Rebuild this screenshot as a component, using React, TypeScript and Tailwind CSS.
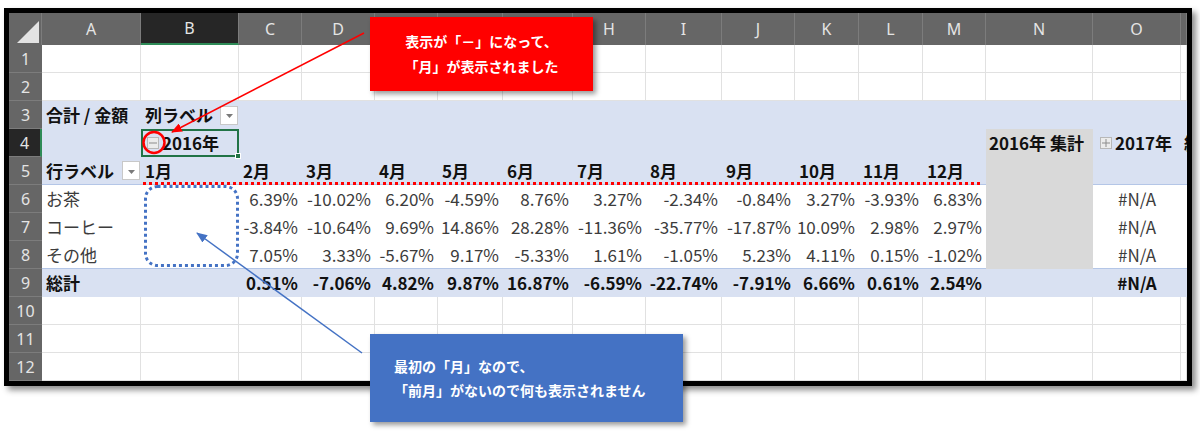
import React from 'react'

const LETTERS = ['', 'A', 'B', 'C', 'D', 'E', 'F', 'G', 'H', 'I', 'J', 'K', 'L', 'M', 'N', 'O', '']
const MONTHS = ['1月', '2月', '3月', '4月', '5月', '6月', '7月', '8月', '9月', '10月', '11月', '12月']

const DATA: Record<number, { label: string; vals: string[] }> = {
  6: {
    label: 'お茶',
    vals: ['6.39%', '-10.02%', '6.20%', '-4.59%', '8.76%', '3.27%', '-2.34%', '-0.84%', '3.27%', '-3.93%', '6.83%'],
  },
  7: {
    label: 'コーヒー',
    vals: ['-3.84%', '-10.64%', '9.69%', '14.86%', '28.28%', '-11.36%', '-35.77%', '-17.87%', '10.09%', '2.98%', '2.97%'],
  },
  8: {
    label: 'その他',
    vals: ['7.05%', '3.33%', '-5.67%', '9.17%', '-5.33%', '1.61%', '-1.05%', '5.23%', '4.11%', '0.15%', '-1.02%'],
  },
  9: {
    label: '総計',
    vals: ['0.51%', '-7.06%', '4.82%', '9.87%', '16.87%', '-6.59%', '-22.74%', '-7.91%', '6.66%', '0.61%', '2.54%'],
  },
}

function Dropdown() {
  return (
    <span className="ml-auto mr-[1px] flex h-[19px] w-[18px] shrink-0 items-center justify-center border border-[#c8c8c8] bg-white">
      <svg width="7" height="4" viewBox="0 0 7 4" className="mt-[2px]">
        <path d="M0 0h7L3.5 4z" fill="#7a7a7a" />
      </svg>
    </span>
  )
}

function Toggle({ plus }: { plus?: boolean }) {
  return (
    <span className="mr-[3px] flex h-[12px] w-[12px] shrink-0 items-center justify-center border border-[#b8b8b8] bg-[#ececec]">
      <svg width="8" height="8" viewBox="0 0 8 8">
        <path d={plus ? 'M0 4h8M4 0v8' : 'M0 4h8'} stroke="#8c8c8c" strokeWidth="1" />
      </svg>
    </span>
  )
}

function Cell({ r, c }: { r: number; c: number }) {
  const pivot = r >= 3 && r <= 9
  let bg = 'bg-white border-r border-b border-[#e1e1e1]'
  if (pivot) {
    if (c === 14 && r >= 4 && r <= 8) bg = 'bg-[#d9d9d9]'
    else if (r >= 6 && r <= 8) bg = 'bg-white'
    else bg = 'bg-[#d9e1f2]'
    if ((r === 5 || r === 8) && c !== 14) bg += ' border-b border-[#b4c6e7]'
  }

  const base = 'flex items-center overflow-hidden whitespace-nowrap text-[17px]'
  const bold = 'font-bold text-[#111]'
  const normal = 'text-[#3c3c3c]'

  // row 3
  if (r === 3 && c === 1) return <div className={`${base} ${bg} ${bold} pl-[4px]`}>合計 / 金額</div>
  if (r === 3 && c === 2)
    return (
      <div className={`${base} ${bg} ${bold} pl-[4px]`}>
        列ラベル
        <Dropdown />
      </div>
    )

  // row 4
  if (r === 4 && c === 2)
    return (
      <div className={`relative ${base} ${bg} ${bold} border-2 border-[#217346] pl-[4px] overflow-visible`}>
        <Toggle />
        2016年
        <span className="absolute -bottom-[4px] -right-[4px] h-[6px] w-[6px] border border-white bg-[#217346]" />
      </div>
    )
  if (r === 4 && c === 14) return <div className={`${base} ${bg} ${bold} pl-[3px]`}>2016年 集計</div>
  if (r === 4 && c === 15)
    return (
      <div className={`${base} ${bg} ${bold} pl-[7px]`}>
        <Toggle plus />
        2017年
      </div>
    )
  if (r === 4 && c === 16) return <div className={`${base} ${bg} ${bold} pl-[3px]`}>総計</div>

  // row 5
  if (r === 5 && c === 1)
    return (
      <div className={`${base} ${bg} ${bold} pl-[4px]`}>
        行ラベル
        <Dropdown />
      </div>
    )
  if (r === 5 && c >= 2 && c <= 13) return <div className={`${base} ${bg} ${bold} pl-[4px]`}>{MONTHS[c - 2]}</div>

  // rows 6-9
  if (r >= 6 && r <= 9) {
    const row = DATA[r]
    const w = r === 9 ? bold : normal
    if (c === 1) return <div className={`${base} ${bg} ${w} pl-[4px]`}>{row.label}</div>
    if (c >= 3 && c <= 13)
      return <div className={`${base} ${bg} ${w} justify-end pr-[4px]`}>{row.vals[c - 3]}</div>
    if (c === 15) return <div className={`${base} ${bg} ${w} justify-center`}>#N/A</div>
  }

  return <div className={bg} />
}

export default function App() {
  const rows = Array.from({ length: 12 }, (_, i) => i + 1)
  const cols = Array.from({ length: 16 }, (_, i) => i + 1)

  return (
    <div className="relative h-[431px] w-[1200px] overflow-hidden bg-white pl-[4px] pt-[8px] font-['Noto_Sans_CJK_JP',sans-serif]">
      {/* sheet frame */}
      <div className="h-[378px] w-[1188px] overflow-hidden border-[5px] border-black shadow-[4px_4px_6px_rgba(0,0,0,0.45)]">
        <div className="grid grid-cols-[33px_99px_98px_63px_73px_63px_65px_70px_73px_76px_73px_64px_64px_63px_107px_88px_6px] grid-rows-[32px_repeat(12,28px)]">
          {/* column headers */}
          <div className="relative border-r border-[#7c7c7c] bg-[#666666]">
            <svg width="33" height="32" className="absolute left-0 top-0">
              <path d="M8 30 L30 30 L30 8 z" fill="#e3e3e3" />
            </svg>
          </div>
          {LETTERS.slice(1).map((l, i) => (
            <div
              key={i}
              className={`flex items-center justify-center font-['Noto_Sans',sans-serif] text-[16px] text-[#e4e4e4] ${
                i === 1
                  ? 'border-b-2 border-r border-b-[#2e8b57] border-r-[#7c7c7c] bg-[#262626]'
                  : 'border-r border-[#7c7c7c] bg-[#666666]'
              }`}
            >
              {l}
            </div>
          ))}

          {rows.map((r) => (
            <React.Fragment key={r}>
              <div
                className={`flex items-center justify-center font-['Noto_Sans',sans-serif] text-[16px] text-[#e4e4e4] ${
                  r === 4
                    ? 'border-b border-r-2 border-b-[#7c7c7c] border-r-[#2e8b57] bg-[#262626]'
                    : 'border-b border-[#7c7c7c] bg-[#666666]'
                }`}
              >
                {r}
              </div>
              {cols.map((c) => (
                <Cell key={c} r={r} c={c} />
              ))}
            </React.Fragment>
          ))}
        </div>
      </div>

      {/* annotations */}
      <svg className="pointer-events-none absolute left-0 top-0" width="1200" height="431">
        <defs>
          <marker id="arRed" markerWidth="11" markerHeight="9" refX="10" refY="4.5" orient="auto" markerUnits="userSpaceOnUse">
            <path d="M0 0 L11 4.5 L0 9 z" fill="#ff0000" />
          </marker>
          <marker id="arBlue" markerWidth="11" markerHeight="9" refX="10" refY="4.5" orient="auto" markerUnits="userSpaceOnUse">
            <path d="M0 0 L11 4.5 L0 9 z" fill="#4472c4" />
          </marker>
        </defs>
        <line x1="143" y1="183.5" x2="981" y2="183.5" stroke="#ff0000" strokeWidth="3" strokeDasharray="3 3" />
        <rect x="145.5" y="186.5" width="92" height="79" rx="12" fill="none" stroke="#4472c4" strokeWidth="3" strokeDasharray="3 3" />
        <circle cx="154" cy="142.5" r="10.5" fill="none" stroke="#ff0000" strokeWidth="2.5" />
        <line x1="364" y1="33" x2="172" y2="132" stroke="#ff0000" strokeWidth="1.5" markerEnd="url(#arRed)" />
        <line x1="362" y1="353" x2="197" y2="233" stroke="#4472c4" strokeWidth="1.5" markerEnd="url(#arBlue)" />
      </svg>

      <div className="absolute left-[370px] top-[17px] flex h-[74px] w-[223px] flex-col items-center justify-center bg-[#ff0000] text-[14px] font-bold leading-[25px] text-white shadow-[3px_3px_5px_rgba(0,0,0,0.4)]">
        <span>表示が「－」になって、</span>
        <span>「月」が表示されました</span>
      </div>

      <div className="absolute left-[370px] top-[334px] flex h-[88px] w-[313px] flex-col justify-center bg-[#4472c4] pl-[24px] text-[14px] font-bold leading-[24px] text-white shadow-[3px_3px_5px_rgba(0,0,0,0.4)]">
        <span>最初の「月」なので、</span>
        <span>「前月」がないので何も表示されません</span>
      </div>
    </div>
  )
}
